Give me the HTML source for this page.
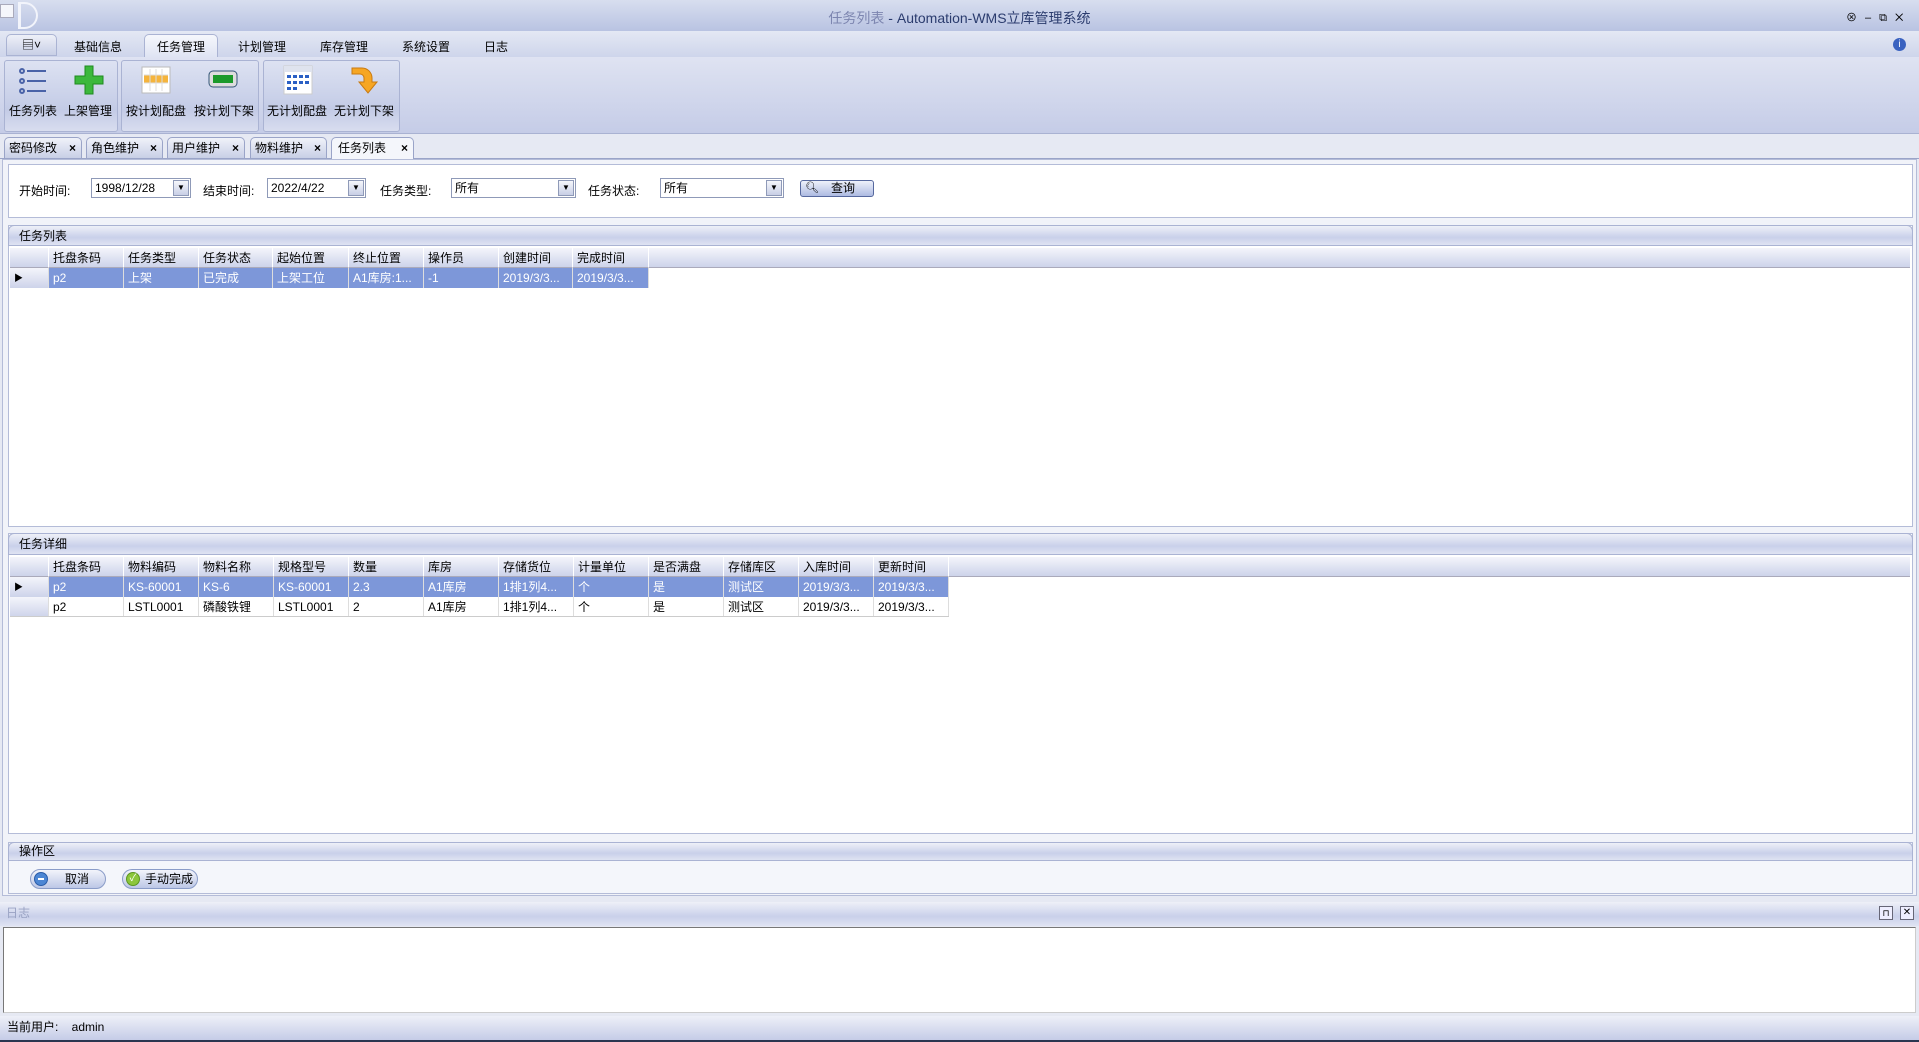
<!DOCTYPE html><html><head><meta charset="utf-8"><style>
*{box-sizing:border-box;margin:0;padding:0}
body{width:1919px;height:1042px;overflow:hidden;background:#e6e9f3;font-family:"Liberation Sans","Noto Sans CJK SC",sans-serif;font-size:12px;color:#000;position:relative}
.a{position:absolute}
.hdr{background:linear-gradient(#eef0f8,#c9d0ea 60%,#dfe3f2);border:1px solid #aab3d3;border-radius:6px 6px 0 0;padding-left:10px;line-height:20px}
.gh{position:absolute;top:0;height:20px;background:linear-gradient(#f4f5fb,#cdd3ea);border-right:1px solid #fff;border-bottom:1px solid #aab;line-height:20px;padding-left:4px;color:#000}
.cell{position:absolute;height:20px;line-height:20px;padding-left:4px;border-right:1px solid #ddd;white-space:nowrap}
.sel{background:#7d97d9;color:#fff}
.combo{position:absolute;height:20px;background:#fff;border:1px solid #8f9ab8;line-height:18px;padding-left:3px}
.combo i{position:absolute;right:1px;top:1px;width:16px;height:16px;background:linear-gradient(#f5f6fb,#c8cfe6);border:1px solid #8f9ab8;font-style:normal;font-size:8px;text-align:center;line-height:14px}
.tab{position:absolute;top:137px;height:21px;background:linear-gradient(#f0f2f9,#c8cfe6);border:1px solid #9aa4c8;border-bottom:none;border-radius:5px 5px 0 0;line-height:20px;padding-left:4px}
.tab b{position:absolute;right:5px;top:0;font-size:12px}
.rb{position:absolute;top:102px;font-size:12px;transform:translateX(-50%);white-space:nowrap}
.grp{position:absolute;top:60px;height:72px;background:linear-gradient(#dde2f2,#c3cbe6 70%,#d8ddef);border:1px solid #aab3d3;border-radius:3px}
.mn{position:absolute;top:38px;font-size:12px}
</style></head><body>
<div class="a" style="left:0;top:0;width:1919px;height:31px;background:linear-gradient(#d8deef,#b9c3e2)"></div>
<div class="a" style="left:0;top:4px;width:14px;height:14px;background:#f5f6fb;border:1px solid #aab"></div>
<div class="a" style="left:18px;top:2px;width:20px;height:27px;border:2px solid #f2f4fb;border-left-width:3px;border-radius:0 14px 14px 0"></div>
<div class="a" style="left:0;top:8px;width:1919px;text-align:center;font-size:14px;color:#2b3c6e"><span style="color:#7d86b0">任务列表</span> - Automation-WMS立库管理系统</div>
<div class="a" style="left:1846px;top:9px;font-size:11px;letter-spacing:8px">⊗–⧉✕</div>
<div class="a" style="left:0;top:31px;width:1919px;height:26px;background:linear-gradient(#e4e8f4,#ced5eb)"></div>
<div class="a" style="left:6px;top:34px;width:51px;height:22px;background:linear-gradient(#eef0f8,#c8cfe6);border:1px solid #aab3d3;border-radius:5px 5px 0 0;text-align:center;line-height:20px">▤˅</div>
<div class="a" style="left:144px;top:34px;width:74px;height:23px;background:linear-gradient(#f6f7fc,#dfe4f3);border:1px solid #aab3d3;border-bottom:none;border-radius:5px 5px 0 0"></div>
<div class="mn" style="left:74px">基础信息</div>
<div class="mn" style="left:157px">任务管理</div>
<div class="mn" style="left:238px">计划管理</div>
<div class="mn" style="left:320px">库存管理</div>
<div class="mn" style="left:402px">系统设置</div>
<div class="mn" style="left:484px">日志</div>
<div class="a" style="left:1893px;top:38px;width:13px;height:13px;border-radius:50%;background:#3a62c0;color:#fff;font-size:10px;text-align:center;line-height:13px">i</div>
<div class="a" style="left:0;top:57px;width:1919px;height:77px;background:linear-gradient(#dfe3f2,#c5cce7);border-bottom:1px solid #a9b2d2"></div>
<div class="grp" style="left:4px;width:114px"></div>
<div class="grp" style="left:121px;width:138px"></div>
<div class="grp" style="left:263px;width:137px"></div>
<svg class="a" style="left:18px;top:66px" width="30" height="30"><g fill="none" stroke="#4a63a8" stroke-width="2"><circle cx="4" cy="5" r="2"/><circle cx="4" cy="15" r="2"/><circle cx="4" cy="25" r="2"/><path d="M9 5h19M9 15h19M9 25h19"/></g></svg>
<svg class="a" style="left:74px;top:64px" width="30" height="32"><path d="M11 2h8v10h10v8H19v10h-8V20H1v-8h10z" fill="#3cb83c" stroke="#1e8a1e"/></svg>
<svg class="a" style="left:141px;top:66px" width="30" height="28"><rect x="1" y="1" width="28" height="26" fill="#fff" stroke="#bbb"/><rect x="3" y="9" width="24" height="8" fill="#f5b43c"/><path d="M3 9h24M3 17h24M9 3v22M15 3v22M21 3v22" stroke="#ddd"/></svg>
<svg class="a" style="left:208px;top:70px" width="30" height="18"><rect x="1" y="1" width="28" height="16" rx="4" fill="#ddd" stroke="#357"/><rect x="5" y="5" width="20" height="8" fill="#1b9a2a"/></svg>
<svg class="a" style="left:283px;top:65px" width="30" height="30"><rect x="1" y="1" width="28" height="28" fill="#fff" stroke="#ccc"/><rect x="1" y="1" width="28" height="6" fill="#dfe3ee"/><g fill="#2a5fc4"><rect x="4" y="10" width="4" height="3"/><rect x="10" y="10" width="4" height="3"/><rect x="16" y="10" width="4" height="3"/><rect x="22" y="10" width="4" height="3"/><rect x="4" y="16" width="4" height="3"/><rect x="10" y="16" width="4" height="3"/><rect x="16" y="16" width="4" height="3"/><rect x="22" y="16" width="4" height="3"/><rect x="4" y="22" width="4" height="3"/><rect x="10" y="22" width="4" height="3"/></g></svg>
<svg class="a" style="left:349px;top:64px" width="30" height="32"><path d="M3 4h10a10 10 0 0 1 10 10v4h5l-9 11-9-11h5v-4a4 4 0 0 0-4-4H3z" fill="#f6a623" stroke="#c97a10"/></svg>
<div class="rb" style="left:33px">任务列表</div><div class="rb" style="left:88px">上架管理</div>
<div class="rb" style="left:156px">按计划配盘</div><div class="rb" style="left:224px">按计划下架</div>
<div class="rb" style="left:297px">无计划配盘</div><div class="rb" style="left:364px">无计划下架</div>
<div class="a" style="left:0;top:158px;width:1919px;height:1px;background:#9aa4c8"></div>
<div class="tab" style="left:4px;width:78px">密码修改<b>×</b></div>
<div class="tab" style="left:86px;width:77px">角色维护<b>×</b></div>
<div class="tab" style="left:167px;width:78px">用户维护<b>×</b></div>
<div class="tab" style="left:250px;width:77px">物料维护<b>×</b></div>
<div class="tab" style="left:331px;width:83px;background:#f4f6fb;height:23px;padding-left:6px">任务列表<b>×</b></div>
<div class="a" style="left:2px;top:159px;width:1915px;height:737px;background:#f1f3f9;border:1px solid #b4bcd8"></div>
<div class="a" style="left:8px;top:164px;width:1905px;height:54px;background:#fff;border:1px solid #b4bcd8"></div>
<div class="a" style="left:19px;top:182px">开始时间:</div>
<div class="combo" style="left:91px;top:178px;width:100px">1998/12/28<i>▼</i></div>
<div class="a" style="left:203px;top:182px">结束时间:</div>
<div class="combo" style="left:267px;top:178px;width:99px">2022/4/22<i>▼</i></div>
<div class="a" style="left:380px;top:182px">任务类型:</div>
<div class="combo" style="left:451px;top:178px;width:125px">所有<i>▼</i></div>
<div class="a" style="left:588px;top:182px">任务状态:</div>
<div class="combo" style="left:660px;top:178px;width:124px">所有<i>▼</i></div>
<div class="a" style="left:800px;top:180px;width:74px;height:17px;border:1px solid #56689e;border-radius:3px;background:linear-gradient(#eef1fa,#aebbe2);line-height:15px;padding-left:30px">查询</div>
<div class="a" style="left:805px;top:181px;font-size:11px">🔍︎</div>
<div class="a" style="left:8px;top:225px;width:1905px;height:302px;background:#fff;border:1px solid #b4bcd8"></div>
<div class="a hdr" style="left:8px;top:225px;width:1905px;height:21px">任务列表</div>
<div class="a" style="left:10px;top:248px;width:1900px;height:20px;background:linear-gradient(#f4f5fb,#cdd3ea);border-bottom:1px solid #aab"></div>
<div class="a" style="top:248px;left:0">
<div class="gh" style="left:10px;width:39px"></div>
<div class="gh" style="left:49px;width:75px">托盘条码</div><div class="gh" style="left:124px;width:75px">任务类型</div><div class="gh" style="left:199px;width:74px">任务状态</div><div class="gh" style="left:273px;width:76px">起始位置</div><div class="gh" style="left:349px;width:75px">终止位置</div><div class="gh" style="left:424px;width:75px">操作员</div><div class="gh" style="left:499px;width:74px">创建时间</div><div class="gh" style="left:573px;width:76px">完成时间</div></div>
<div class="a" style="top:268px;left:0">
<div class="cell" style="left:10px;width:39px;background:linear-gradient(#f4f5fb,#cdd3ea);font-size:9px">▶</div>
<div class="cell sel" style="left:49px;width:75px">p2</div><div class="cell sel" style="left:124px;width:75px">上架</div><div class="cell sel" style="left:199px;width:74px">已完成</div><div class="cell sel" style="left:273px;width:76px">上架工位</div><div class="cell sel" style="left:349px;width:75px">A1库房:1...</div><div class="cell sel" style="left:424px;width:75px">-1</div><div class="cell sel" style="left:499px;width:74px">2019/3/3...</div><div class="cell sel" style="left:573px;width:76px">2019/3/3...</div></div>
<div class="a" style="left:8px;top:533px;width:1905px;height:301px;background:#fff;border:1px solid #b4bcd8"></div>
<div class="a hdr" style="left:8px;top:533px;width:1905px;height:22px">任务详细</div>
<div class="a" style="left:10px;top:557px;width:1900px;height:20px;background:linear-gradient(#f4f5fb,#cdd3ea);border-bottom:1px solid #aab"></div>
<div class="a" style="top:557px;left:0">
<div class="gh" style="left:10px;width:39px"></div>
<div class="gh" style="left:49px;width:75px">托盘条码</div><div class="gh" style="left:124px;width:75px">物料编码</div><div class="gh" style="left:199px;width:75px">物料名称</div><div class="gh" style="left:274px;width:75px">规格型号</div><div class="gh" style="left:349px;width:75px">数量</div><div class="gh" style="left:424px;width:75px">库房</div><div class="gh" style="left:499px;width:75px">存储货位</div><div class="gh" style="left:574px;width:75px">计量单位</div><div class="gh" style="left:649px;width:75px">是否满盘</div><div class="gh" style="left:724px;width:75px">存储库区</div><div class="gh" style="left:799px;width:75px">入库时间</div><div class="gh" style="left:874px;width:75px">更新时间</div></div>
<div class="a" style="top:577px;left:0">
<div class="cell" style="left:10px;width:39px;background:linear-gradient(#f4f5fb,#cdd3ea);font-size:9px">▶</div>
<div class="cell sel" style="left:49px;width:75px">p2</div><div class="cell sel" style="left:124px;width:75px">KS-60001</div><div class="cell sel" style="left:199px;width:75px">KS-6</div><div class="cell sel" style="left:274px;width:75px">KS-60001</div><div class="cell sel" style="left:349px;width:75px">2.3</div><div class="cell sel" style="left:424px;width:75px">A1库房</div><div class="cell sel" style="left:499px;width:75px">1排1列4...</div><div class="cell sel" style="left:574px;width:75px">个</div><div class="cell sel" style="left:649px;width:75px">是</div><div class="cell sel" style="left:724px;width:75px">测试区</div><div class="cell sel" style="left:799px;width:75px">2019/3/3...</div><div class="cell sel" style="left:874px;width:75px">2019/3/3...</div></div>
<div class="a" style="top:597px;left:0">
<div class="cell" style="left:10px;width:39px;background:linear-gradient(#f4f5fb,#cdd3ea)"></div>
<div class="cell" style="left:49px;width:75px">p2</div><div class="cell" style="left:124px;width:75px">LSTL0001</div><div class="cell" style="left:199px;width:75px">磷酸铁锂</div><div class="cell" style="left:274px;width:75px">LSTL0001</div><div class="cell" style="left:349px;width:75px">2</div><div class="cell" style="left:424px;width:75px">A1库房</div><div class="cell" style="left:499px;width:75px">1排1列4...</div><div class="cell" style="left:574px;width:75px">个</div><div class="cell" style="left:649px;width:75px">是</div><div class="cell" style="left:724px;width:75px">测试区</div><div class="cell" style="left:799px;width:75px">2019/3/3...</div><div class="cell" style="left:874px;width:75px">2019/3/3...</div></div>
<div class="a" style="left:10px;top:616px;width:939px;height:1px;background:#ccc"></div>
<div class="a" style="left:8px;top:842px;width:1905px;height:52px;background:#f4f6fb;border:1px solid #b4bcd8"></div>
<div class="a hdr" style="left:8px;top:842px;width:1905px;height:19px;line-height:17px">操作区</div>
<div class="a" style="left:30px;top:869px;width:76px;height:20px;border:1px solid #8a9cc8;border-radius:10px;background:linear-gradient(#f2f4fb,#bcc7e6);line-height:18px;padding-left:34px">取消</div>
<div class="a" style="left:34px;top:872px;width:14px;height:14px;border-radius:50%;background:#4c86d4;border:1px solid #2a5ca8"><div style="margin:5px 3px;height:2px;background:#fff"></div></div>
<div class="a" style="left:122px;top:869px;width:76px;height:20px;border:1px solid #8a9cc8;border-radius:10px;background:linear-gradient(#f2f4fb,#bcc7e6);line-height:18px;padding-left:22px">手动完成</div>
<div class="a" style="left:126px;top:872px;width:14px;height:14px;border-radius:50%;background:#8cc63c;border:1px solid #5a9620;color:#fff;font-size:10px;line-height:12px;text-align:center">✓</div>
<div class="a" style="left:0;top:902px;width:1919px;height:24px;background:linear-gradient(#eef0f8,#c9d0ea 60%,#dfe3f2);line-height:22px;padding-left:6px;color:#9aa3c4">日志</div>
<div class="a" style="left:1879px;top:906px;width:14px;height:14px;border:1px solid #667;background:#eef;font-size:9px;text-align:center;line-height:12px">⊓</div>
<div class="a" style="left:1900px;top:906px;width:14px;height:14px;border:1px solid #667;background:#eef;font-size:10px;text-align:center;line-height:12px">✕</div>
<div class="a" style="left:3px;top:927px;width:1913px;height:86px;background:#fff;border:1px solid #777;border-right-color:#ccc;border-bottom-color:#ccc"></div>
<div class="a" style="left:0;top:1016px;width:1919px;height:24px;background:linear-gradient(#eef0f8,#c5cce7);line-height:22px;padding-left:7px">当前用户:&nbsp;&nbsp;&nbsp;&nbsp;admin</div>
<div class="a" style="left:0;top:1040px;width:1919px;height:2px;background:#2a3550"></div>
</body></html>
